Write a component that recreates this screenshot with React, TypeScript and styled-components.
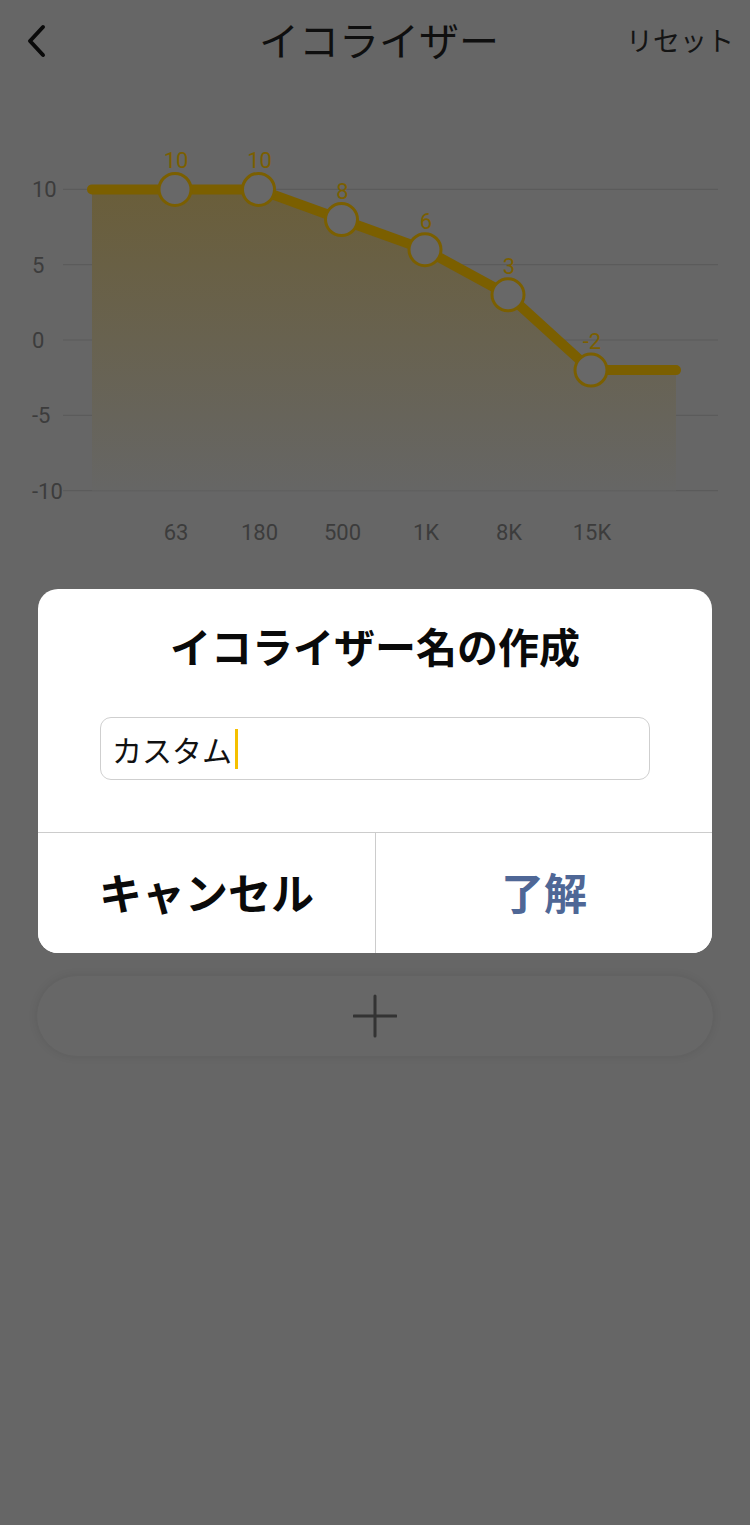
import React from "react";
import styled, { createGlobalStyle } from "styled-components";

const GlobalStyle = createGlobalStyle`
  html, body { margin: 0; padding: 0; background: #666666; }
  * { box-sizing: border-box; }
`;

const JP = `"Noto Sans CJK JP", "Noto Sans", sans-serif`;

const Screen = styled.div`
  position: relative;
  width: 750px;
  min-height: 1525px;
  background: #666666;
  font-family: ${JP};
  overflow: hidden;
`;

const Header = styled.header`
  display: grid;
  grid-template-columns: 1fr auto 1fr;
  align-items: center;
  height: 84px;
  padding: 0 16px 6px 24px;
`;

const BackButton = styled.button`
  justify-self: start;
  display: flex;
  align-items: center;
  background: none;
  border: 0;
  padding: 0;
  width: 30px;
  height: 40px;
  margin-top: 4px;
  cursor: pointer;
`;

const Title = styled.h1`
  margin: 0;
  font-size: 40px;
  font-weight: 400;
  color: #0f0f0f;
  line-height: 1;
`;

const ResetLink = styled.span`
  justify-self: end;
  font-size: 27px;
  line-height: 1;
  color: #141414;
`;

const ChartSvg = styled.svg`
  display: block;
  width: 750px;
  height: 476px;
`;

const AddPill = styled.button`
  display: flex;
  align-items: center;
  justify-content: center;
  margin: 415px 36px 0;
  width: calc(100% - 72px);
  height: 82px;
  border-radius: 41px;
  background: #676767;
  border: 1px solid #626262;
  box-shadow: 0 0 8px rgba(0, 0, 0, 0.08);
`;

const Dialog = styled.div`
  position: absolute;
  left: 38px;
  top: 589px;
  width: 674px;
  background: #ffffff;
  border-radius: 20px;
  overflow: hidden;
  display: flex;
  flex-direction: column;
`;

const DialogTitle = styled.h2`
  margin: 0;
  padding: 26px 0 0;
  height: 128px;
  text-align: center;
  font-size: 41px;
  font-weight: 700;
  color: #0a0a0a;
  line-height: 60px;
`;

const FieldRow = styled.div`
  padding: 0 62px;
  height: 115px;
`;

const Field = styled.div`
  display: flex;
  align-items: center;
  height: 63px;
  border: 1px solid #cfcfcf;
  border-radius: 11px;
  padding: 0 11px;
  font-size: 30px;
  color: #111;
`;

const Caret = styled.span`
  display: inline-block;
  width: 3px;
  height: 40px;
  margin-left: 3px;
  background: #f5c000;
`;

const Actions = styled.div`
  display: grid;
  grid-template-columns: 1fr 1fr;
  border-top: 1px solid #cccccc;
  height: 121px;
`;

const ActionButton = styled.button<{ $primary?: boolean }>`
  border: 0;
  background: #fff;
  font-family: ${JP};
  font-size: 43px;
  font-weight: 700;
  color: ${(p) => (p.$primary ? "#4f6796" : "#0a0a0a")};
  border-left: ${(p) => (p.$primary ? "1px solid #cccccc" : "0")};
  padding: 0 0 4px;
`;

const points = [
  { x: 175, v: 10, label: "63" },
  { x: 258.5, v: 10, label: "180" },
  { x: 341.5, v: 8, label: "500" },
  { x: 425, v: 6, label: "1K" },
  { x: 508, v: 3, label: "8K" },
  { x: 591, v: -2, label: "15K" },
];
const yOf = (v: number) => 340 - v * 15.06;

const GOLD = "#7b5f00";

function Chart() {
  const startX = 92;
  const endX = 676;
  const lineD =
    `M${startX} ${yOf(10)} ` +
    points.map((p) => `L${p.x} ${yOf(p.v)}`).join(" ") +
    ` L${endX} ${yOf(-2)}`;
  const fillD = lineD + ` L${endX} ${yOf(-10)} L${startX} ${yOf(-10)} Z`;
  const ticks = [10, 5, 0, -5, -10];
  return (
    <ChartSvg viewBox="0 84 750 476">
      <defs>
        <linearGradient id="eqFill" x1="0" y1="0" x2="0" y2="1">
          <stop offset="0" stopColor="#6a5e3a" />
          <stop offset="1" stopColor="#666665" />
        </linearGradient>
      </defs>
      {ticks.map((t) => (
        <g key={t}>
          <line x1={63} x2={718} y1={yOf(t)} y2={yOf(t)} stroke="#5b5b5b" strokeWidth={1.2} />
          <text
            x={32}
            y={yOf(t) + 8}
            fontFamily="Roboto, sans-serif"
            fontSize={22}
            fill="#3c3c3c"
          >
            {t}
          </text>
        </g>
      ))}
      <path d={fillD} fill="url(#eqFill)" />
      <path d={lineD} fill="none" stroke={GOLD} strokeWidth={10} strokeLinecap="round" strokeLinejoin="round" />
      {points.map((p) => (
        <g key={p.label}>
          <circle cx={p.x} cy={yOf(p.v)} r={16} fill="#686868" stroke={GOLD} strokeWidth={3} />
          <text
            x={p.x + 1}
            y={yOf(p.v) - 21}
            textAnchor="middle"
            fontFamily="Roboto, sans-serif"
            fontSize={22}
            fill={GOLD}
          >
            {p.v}
          </text>
          <text
            x={p.x + 1}
            y={540}
            textAnchor="middle"
            fontFamily="Roboto, sans-serif"
            fontSize={22}
            fill="#3c3c3c"
          >
            {p.label}
          </text>
        </g>
      ))}
    </ChartSvg>
  );
}

export default function App() {
  return (
    <>
      <GlobalStyle />
      <Screen>
        <Header>
          <BackButton aria-label="戻る">
            <svg width="24" height="34" viewBox="0 0 24 34">
              <path d="M19 3 L6 17 L19 31" fill="none" stroke="#0a0a0a" strokeWidth={4} strokeLinecap="round" strokeLinejoin="round" />
            </svg>
          </BackButton>
          <Title>イコライザー</Title>
          <ResetLink>リセット</ResetLink>
        </Header>
        <Chart />
        <AddPill aria-label="追加">
          <svg width="44" height="44" viewBox="0 0 44 44">
            <path d="M22 2 V42 M1 22 H43" stroke="#333333" strokeWidth={3} strokeLinecap="round" />
          </svg>
        </AddPill>
        <Dialog role="dialog">
          <DialogTitle>イコライザー名の作成</DialogTitle>
          <FieldRow>
            <Field>
              カスタム
              <Caret />
            </Field>
          </FieldRow>
          <Actions>
            <ActionButton>キャンセル</ActionButton>
            <ActionButton $primary>了解</ActionButton>
          </Actions>
        </Dialog>
      </Screen>
    </>
  );
}
